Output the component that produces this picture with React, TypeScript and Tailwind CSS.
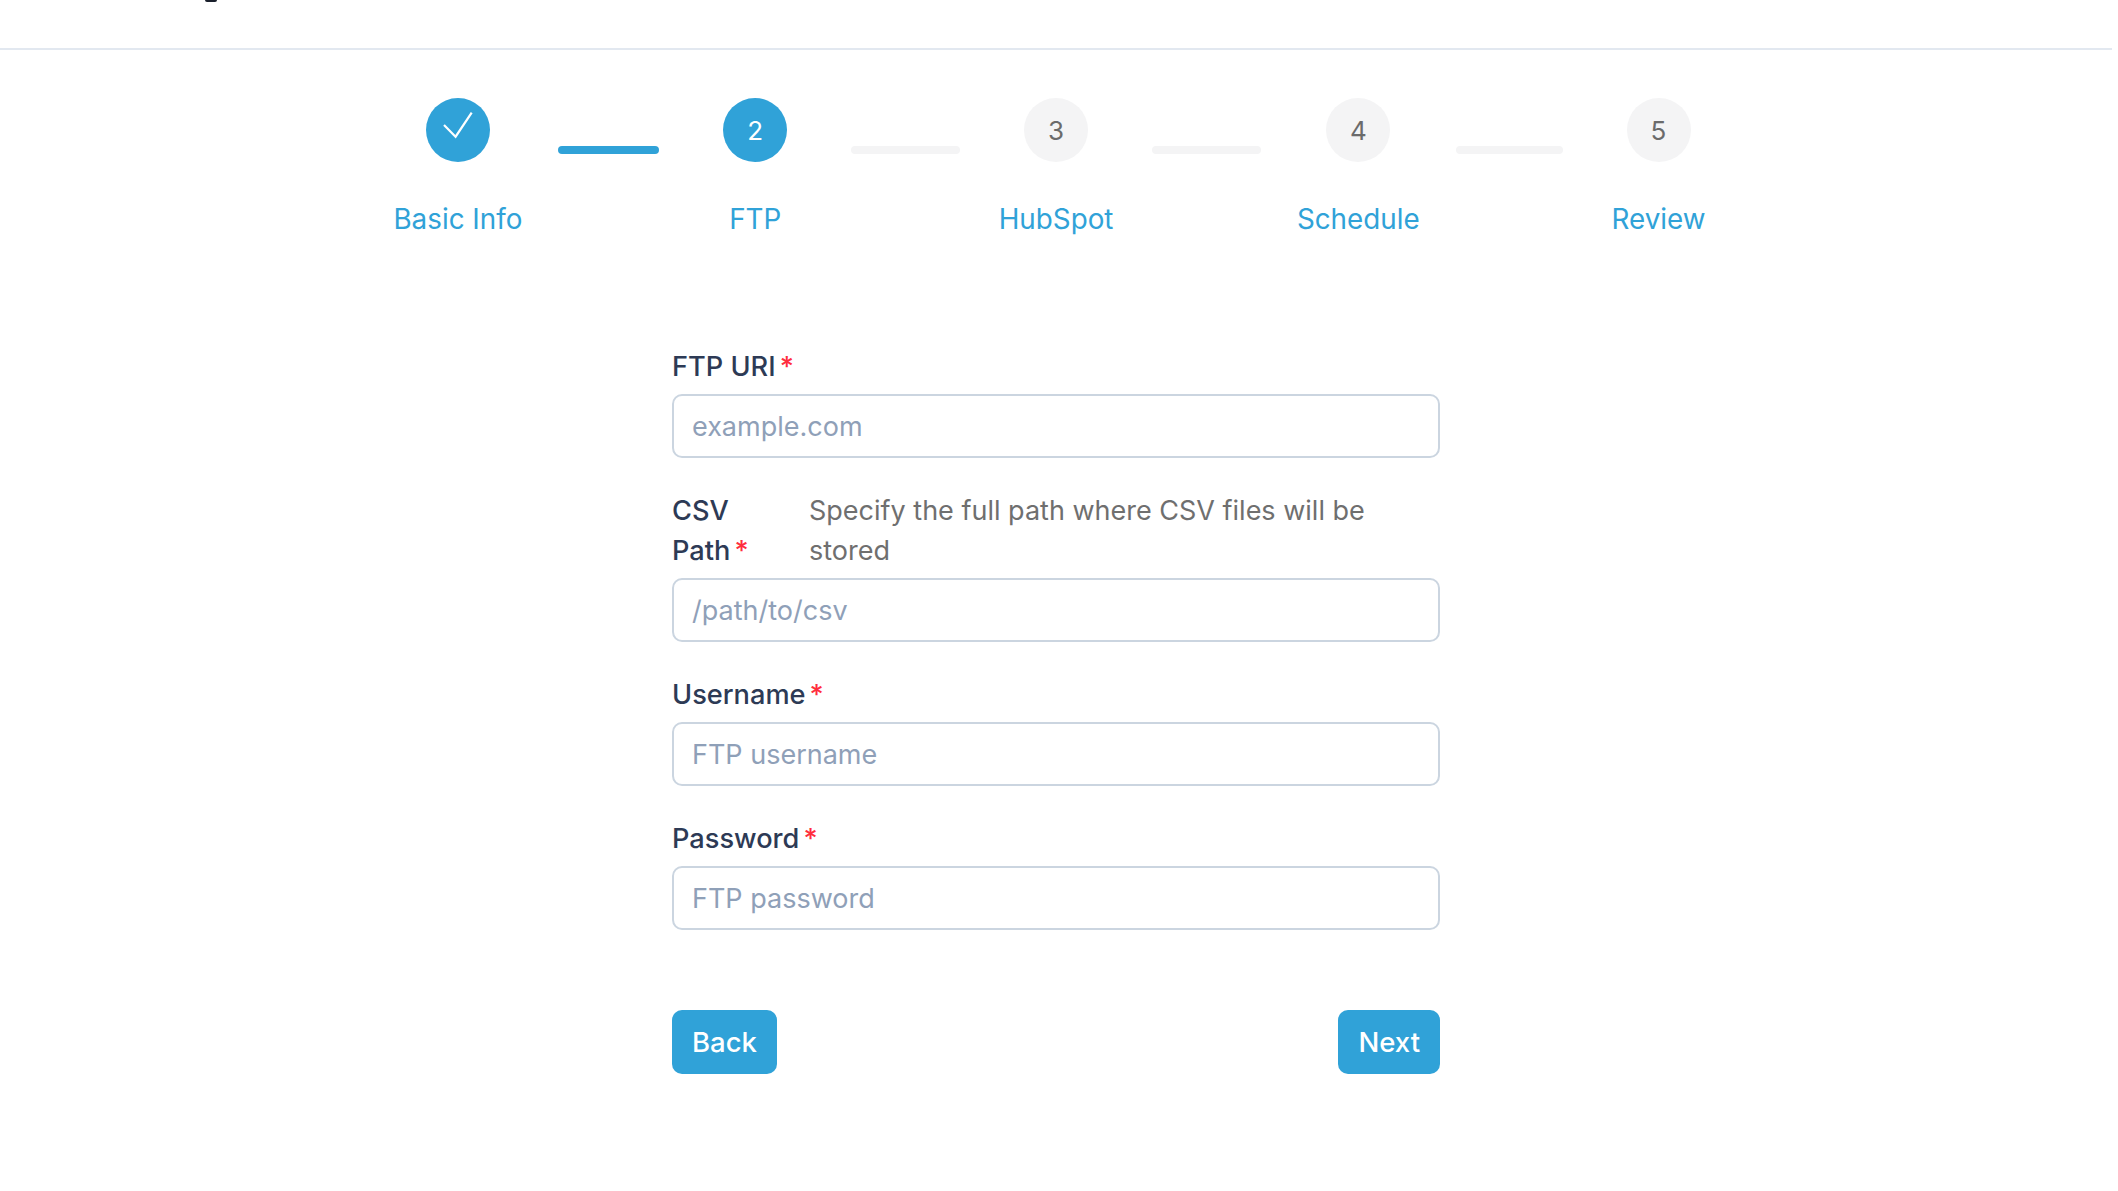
const steps = [
  { label: "Basic Info", state: "done" },
  { label: "FTP", state: "active" },
  { label: "HubSpot", state: "todo" },
  { label: "Schedule", state: "todo" },
  { label: "Review", state: "todo" },
]

const barClasses = [
  "w-[101px] bg-[#30a2d8]",
  "w-[109px] bg-[#f4f4f5]",
  "w-[109px] bg-[#f4f4f5]",
  "w-[107px] bg-[#f4f4f5]",
]

function Required() {
  return <span className="ml-1 text-[#ff2d3d]">*</span>
}

function Field({ label, placeholder }: { label: string; placeholder: string }) {
  return (
    <div>
      <label className="mb-[7px] block pt-px text-[27.2px] leading-[40px] font-medium text-[#2d3a55]">
        {label}
        <Required />
      </label>
      <TextInput placeholder={placeholder} />
    </div>
  )
}

function TextInput({ placeholder }: { placeholder: string }) {
  return (
    <input
      placeholder={placeholder}
      className="block h-16 w-full rounded-[10px] border-2 border-[#cbd5e0] bg-white px-[18px] text-[27px] text-[#2d3748] outline-none placeholder:text-[#8fa0b8]"
    />
  )
}

function StepCircle({ index, state }: { index: number; state: string }) {
  if (state === "done") {
    return (
      <div className="h-16 w-16 rounded-full bg-[#30a2d8]">
        <svg viewBox="0 0 64 64" className="h-16 w-16" fill="none" stroke="#ffffff" strokeWidth="2.2">
          <path d="M18 27 L29.6 38.7 L45.7 14.7" />
        </svg>
      </div>
    )
  }
  return (
    <div
      className={
        state === "active"
          ? "flex h-16 w-16 items-center justify-center rounded-full bg-[#30a2d8] text-[26px] text-white"
          : "flex h-16 w-16 items-center justify-center rounded-full bg-[#f4f4f5] text-[26px] text-[#6b6b6b]"
      }
    >
      {index + 1}
    </div>
  )
}

export default function App() {
  return (
    <div className="min-h-screen w-[2112px] bg-white font-['Inter',sans-serif]">
      <header className="h-[50px] border-b-2 border-[#e2e8f0]">
        <div className="ml-[205px] h-[2px] w-3 rounded-b-full bg-[#1a202c]" />
      </header>

      <div className="mx-auto mt-12 flex w-[1397px] items-start">
        {steps.map((step, i) => (
          <div key={step.label} className="contents">
            <div className="flex min-w-[192px] flex-col items-center px-9">
              <StepCircle index={i} state={step.state} />
              <div className="mt-[37px] text-[27.8px] leading-[40px] whitespace-nowrap text-[#30a2d8]">{step.label}</div>
            </div>
            {i < barClasses.length && <div className={`mt-12 h-2 rounded-full ${barClasses[i]}`} />}
          </div>
        ))}
      </div>

      <form className="mx-auto mt-[107px] flex w-[768px] flex-col gap-8">
        <Field label="FTP URI" placeholder="example.com" />
        <div>
          <div className="mb-[7px] flex pt-px text-[27.2px] leading-[40px]">
            <label className="w-[137px] shrink-0 pr-8 font-medium text-[#2d3a55]">
              CSV Path
              <Required />
            </label>
            <span className="text-[27px] text-[#6f6f6f]">Specify the full path where CSV files will be stored</span>
          </div>
          <TextInput placeholder="/path/to/csv" />
        </div>
        <Field label="Username" placeholder="FTP username" />
        <Field label="Password" placeholder="FTP password" />

        <div className="mt-12 flex justify-between">
          <button type="button" className="h-16 rounded-[10px] bg-[#30a2d8] px-5 pt-px text-[27.5px] font-medium text-white">
            Back
          </button>
          <button type="button" className="h-16 rounded-[10px] bg-[#30a2d8] px-5 pt-px text-[27.5px] font-medium text-white">
            Next
          </button>
        </div>
      </form>
    </div>
  )
}
